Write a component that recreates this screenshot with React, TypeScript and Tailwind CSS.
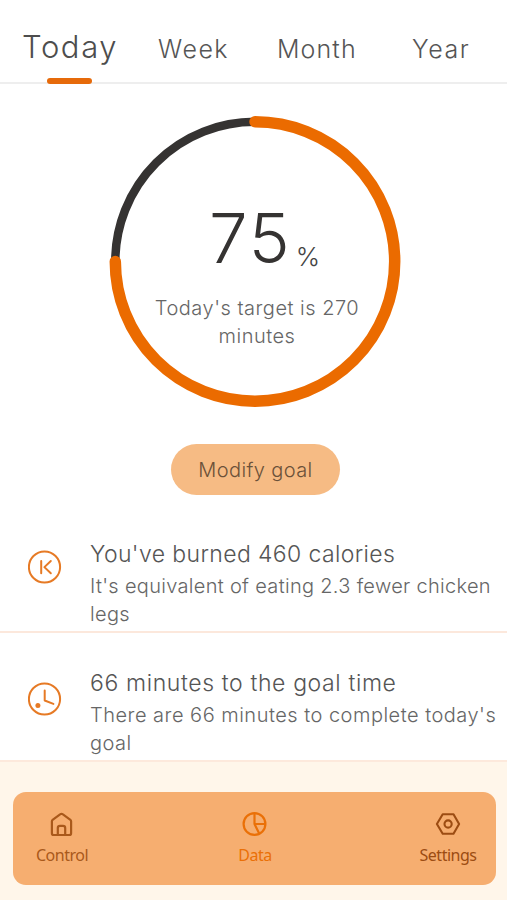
const tabs = [
  { label: "Today", className: "w-[94px] ml-[22px] text-[31px] tracking-[1.6px] text-[#4d4d4d]" },
  { label: "Week", className: "w-[71px] ml-[42px] text-[25px] tracking-[1.5px] text-[#555]" },
  { label: "Month", className: "w-[79px] ml-[48px] text-[25px] tracking-[1.1px] text-[#555]" },
  { label: "Year", className: "w-[58px] ml-[56px] text-[25px] tracking-[1.5px] text-[#555]" },
];

function CaloriesIcon() {
  return (
    <svg width="34" height="34" viewBox="0 0 34 34" fill="none" stroke="#e67a25" strokeWidth="2" strokeLinecap="round" strokeLinejoin="round">
      <circle cx="16.5" cy="17" r="15.6" />
      <path d="M13.2 11v12.2M22.8 11l-6.4 6.1 6.4 6.1" />
    </svg>
  );
}

function ClockIcon() {
  return (
    <svg width="34" height="34" viewBox="0 0 34 34" fill="none" stroke="#e67a25" strokeWidth="2" strokeLinecap="round" strokeLinejoin="round">
      <circle cx="16.5" cy="17" r="15.6" />
      <path d="M16.7 8.5v10l8.7 3.4" />
      <circle cx="9.9" cy="23.5" r="2.5" fill="#e67a25" stroke="none" />
    </svg>
  );
}

function HomeIcon() {
  return (
    <svg width="26" height="26" viewBox="0 0 26 26" fill="none" stroke="currentColor" strokeWidth="2.2" strokeLinejoin="round">
      <path d="M11.4 3.2 3.6 8.9a1.7 1.7 0 0 0-.7 1.3v12A1.8 1.8 0 0 0 4.7 24h15.6a1.8 1.8 0 0 0 1.8-1.8v-12a1.7 1.7 0 0 0-.7-1.3l-7.8-5.7a1.8 1.8 0 0 0-2.2 0z" />
      <path d="M8.8 24v-7a2.2 2.2 0 0 1 2.2-2.2h3a2.2 2.2 0 0 1 2.2 2.2v7" />
    </svg>
  );
}

function DataIcon() {
  return (
    <svg width="26" height="26" viewBox="0 0 26 26" fill="none" stroke="currentColor" strokeWidth="2.2" strokeLinejoin="round">
      <circle cx="12.5" cy="13" r="10.9" />
      <path d="M12.5 2v11h11M12.5 13l4.7 9.5" />
    </svg>
  );
}

function SettingsIcon() {
  return (
    <svg width="26" height="26" viewBox="0 0 26 26" fill="none" stroke="currentColor" strokeWidth="2.1" strokeLinejoin="round">
      <path d="M7.7 3.2h10.8l5.6 9.8-5.6 9.8H7.7L1.9 13z" />
      <circle cx="13.1" cy="13" r="3.6" />
    </svg>
  );
}

export default function App() {
  return (
    <div className="flex h-[900px] w-[507px] flex-col overflow-hidden bg-white font-['Inter',sans-serif] font-light">
      <header className="h-[84px] border-b-2 border-[#eeeeee]">
        <nav className="flex h-[78px] items-baseline pt-[29px]">
          {tabs.map((tab) => (
            <button key={tab.label} className={"text-left leading-9 whitespace-nowrap " + tab.className}>
              {tab.label}
            </button>
          ))}
        </nav>
        <div className="ml-[47px] h-[6px] w-[45px] rounded-full bg-[#e66a0a]" />
      </header>

      <main className="flex flex-1 flex-col">
        <section className="flex h-[457px] flex-col items-center">
          <div className="relative mt-[30px] h-[296px] w-[296px]">
            <svg width="296" height="296" viewBox="0 0 296 296" fill="none">
              <path d="M9.3 147.5A139.7 139.7 0 0 1 149 7.8" stroke="#353332" strokeWidth="8.5" />
              <path d="M149 7.8A139.7 139.7 0 1 1 9.3 147.5" stroke="#eb6b00" strokeWidth="11.5" strokeLinecap="round" />
            </svg>
            <div className="absolute inset-0 flex flex-col items-center pt-[86px] pl-[7px]">
              <div className="ml-[15px] flex items-baseline text-[#353332]">
                <span className="text-[69px] leading-[76px] tracking-[2px]">75</span>
                <span className="relative top-[3px] ml-[4px] text-[26px] text-[#444]">%</span>
              </div>
              <p className="mt-[18px] w-[220px] text-center text-[20px] leading-7 tracking-[0.5px] text-[#666]">
                Today's target is 270
                <br />
                minutes
              </p>
            </div>
          </div>
          <button className="mt-[34px] mr-[-4px] h-[51px] w-[169px] rounded-full bg-[#f6bb84] text-[20px] tracking-[0.4px] text-[#6b5139]">
            Modify goal
          </button>
        </section>

        <section className="flex h-[92px] gap-[28px] border-b-2 border-[#fce8dc] pl-[28px]">
          <div className="pt-[9px]">
            <CaloriesIcon />
          </div>
          <div className="whitespace-nowrap">
            <h2 className="text-[23px] leading-[26px] tracking-[0.38px] text-[#555]">You've burned 460 calories</h2>
            <p className="mt-[5px] text-[20px] leading-7 tracking-[0.31px] text-[#666]">
              It's equivalent of eating 2.3 fewer chicken
              <br />
              legs
            </p>
          </div>
        </section>

        <section className="flex h-[127px] gap-[28px] pt-[37px] pl-[28px]">
          <div className="pt-[12px]">
            <ClockIcon />
          </div>
          <div className="whitespace-nowrap">
            <h2 className="text-[23px] leading-[26px] tracking-[0.62px] text-[#555]">66 minutes to the goal time</h2>
            <p className="mt-[5px] text-[20px] leading-7 tracking-[0.49px] text-[#666]">
              There are 66 minutes to complete today's
              <br />
              goal
            </p>
          </div>
        </section>
      </main>

      <footer className="h-[140px] border-t-2 border-[#fde9dc] bg-[#fff6ea] pt-[30px] pl-[13px] font-['Noto_Sans',sans-serif] font-normal">
        <nav className="flex h-[93px] w-[483px] justify-between rounded-[13px] bg-[#f6ae70] pt-[19px] pr-[18px] pl-[19px] text-[16px] leading-6 tracking-[-0.5px]">
          <button className="flex w-[60px] flex-col items-center gap-[6px] text-[#a9591b]">
            <HomeIcon />
            Control
          </button>
          <button className="flex w-[60px] flex-col items-center gap-[6px] text-[#ea7007]">
            <DataIcon />
            Data
          </button>
          <button className="flex w-[60px] flex-col items-center gap-[6px] text-[#9c4c12]">
            <SettingsIcon />
            Settings
          </button>
        </nav>
      </footer>
    </div>
  );
}
